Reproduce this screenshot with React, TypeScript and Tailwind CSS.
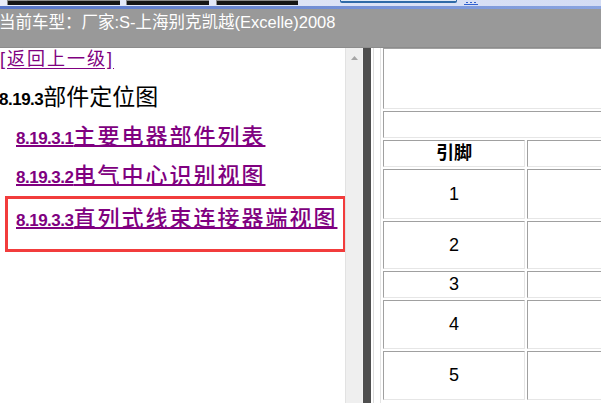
import React from 'react';

const cjk = '"Liberation Sans", "Noto Sans CJK SC", sans-serif';

const Cell = ({ className, children }: { className: string; children?: React.ReactNode }) => (
  <div
    className={`flex items-center justify-center shrink-0 border-t border-l border-t-[#a0a0a0] border-l-[#a0a0a0] border-b border-r border-b-[#e6e6e6] border-r-[#e6e6e6] text-[18px] text-black ${className}`}
  >
    {children}
  </div>
);

const pinRows = [
  { label: '引脚', h: 'h-[27px]', bold: true },
  { label: '1', h: 'h-[50px]' },
  { label: '2', h: 'h-[48px]' },
  { label: '3', h: 'h-[27px]' },
  { label: '4', h: 'h-[49px]' },
  { label: '5', h: 'h-[49px]' },
];

const links = [
  { num: '8.19.3.1', text: '主要电器部件列表' },
  { num: '8.19.3.2', text: '电气中心识别视图' },
];

const SectionLink = ({ num, text }: { num: string; text: string }) => (
  <span className="text-[#800080] underline decoration-[2px] underline-offset-[1px] flex items-baseline w-fit">
    <span className="text-[17px] font-bold tracking-[-0.5px]">{num}</span>
    <span className="text-[22px] leading-[24px] font-medium tracking-[2px]">{text}</span>
  </span>
);

export default function App() {
  return (
    <div className="w-[601px] h-[403px] overflow-hidden flex flex-col bg-white" style={{ fontFamily: cjk }}>
      {/* Toolbar strip */}
      <div className="h-[6px] flex items-start bg-gradient-to-r from-[#e9ecf8] to-[#d3dcf4] shrink-0">
        <div className="w-[7px]" />
        <div className="w-[113px] h-[5px] bg-[#151515] border-t border-l border-[#8a8a8a]" />
        <div className="w-[6px]" />
        <div className="w-[83px] h-[5px] bg-[#151515] border-t border-l border-[#8a8a8a]" />
        <div className="w-[7px]" />
        <div className="w-[82px] h-[5px] bg-[#151515] border-t border-l border-[#8a8a8a]" />
        <div className="w-[42px]" />
        <div className="w-[117px] h-[3px] bg-[#dfe9f6] border-b-2 border-l border-r border-[#2f6aa8] rounded-b-[2px]" />
        <div className="w-[7px]" />
        <div className="w-[14px] h-[5px] border-b border-[#3060d0] flex items-end justify-between px-[2px] pb-[1px]">
          <span className="w-[2px] h-[1px] bg-[#3060d0]" />
          <span className="w-[2px] h-[1px] bg-[#3060d0]" />
          <span className="w-[2px] h-[1px] bg-[#3060d0]" />
        </div>
      </div>
      <div className="h-[3px] shrink-0 bg-gradient-to-r from-[#5876c8] to-[#8aa4e0]" />

      {/* Title band */}
      <div className="h-[39px] shrink-0 bg-[#999999] border-b border-[#8c8c8c] pt-[2px]">
        <div className="text-[16.5px] leading-[22px] text-white whitespace-nowrap -ml-[1px]">
          当前车型：厂家:S-上海别克凯越(Excelle)2008
        </div>
      </div>

      {/* Main */}
      <div className="flex-1 flex min-h-0">
        {/* Left pane */}
        <div className="w-[345px] shrink-0 bg-white overflow-hidden">
          <div className="text-[18px] leading-[22px] text-[#800080] whitespace-nowrap">
            <span className="underline underline-offset-[3px] tracking-[2px]">[返回上一级]</span>
          </div>
          <div className="mt-[14px] flex items-baseline text-black whitespace-nowrap -ml-[1px]">
            <span className="text-[17px] font-bold tracking-[-0.5px]">8.19.3</span>
            <span className="text-[23px] leading-[26px]">部件定位图</span>
          </div>
          <div className="mt-[12px] flex flex-col gap-[13px] pl-[16px]">
            {links.map(l => (
              <div key={l.num} className="whitespace-nowrap">
                <SectionLink num={l.num} text={l.text} />
              </div>
            ))}
          </div>
          <div className="ml-[5px] mt-[5px] w-[341px] h-[56px] border-[3px] border-[#f23c3c] pl-[8px] pt-[8px] whitespace-nowrap">
            <SectionLink num="8.19.3.3" text="直列式线束连接器端视图" />
          </div>
        </div>

        {/* Scrollbar */}
        <div className="w-[17px] shrink-0 bg-[#efefef] border-l border-[#e2e2e2] flex justify-center pt-[8px]">
          <svg width="7" height="4" viewBox="0 0 7 4">
            <path d="M0 4 L3.5 0 L7 4 Z" fill="#a6a6a6" />
          </svg>
        </div>

        {/* Splitter */}
        <div className="w-[9px] shrink-0 bg-[#4f4f4f] border-l border-[#f4f4f4]" />

        {/* Right pane */}
        <div className="flex-1 min-w-0 overflow-hidden bg-white flex">
          <div className="w-[2px] shrink-0" />
          <div className="w-[1px] shrink-0 bg-[#dddddd]" />
          <div className="w-[6px] shrink-0" />
          <div className="w-[1px] shrink-0 bg-[#e4e4e4]" />
          <div className="w-[2px] shrink-0" />
          <div className="flex flex-col gap-[2px]">
            <Cell className="w-[400px] h-[61px]" />
            <Cell className="w-[400px] h-[27px]" />
            {pinRows.map(r => (
              <div key={r.label} className="flex gap-[2px]">
                <Cell className={`w-[142px] ${r.h} ${r.bold ? 'font-bold' : ''}`}>{r.label}</Cell>
                <Cell className={`w-[256px] ${r.h}`} />
              </div>
            ))}
          </div>
        </div>
      </div>
    </div>
  );
}
